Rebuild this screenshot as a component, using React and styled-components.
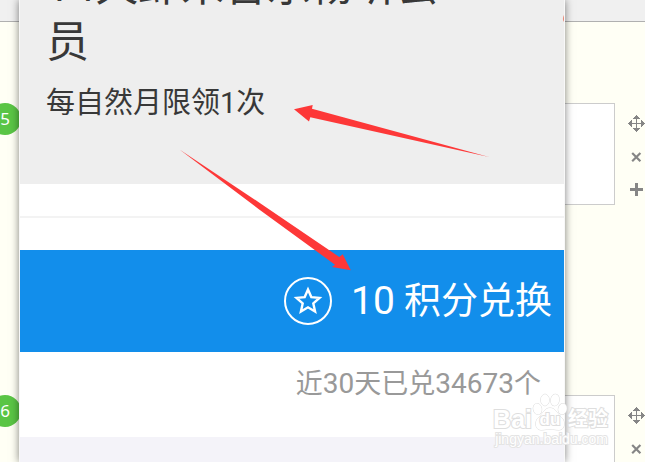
import React from "react";
import styled, { createGlobalStyle } from "styled-components";

const steps = [5, 6];

function MoveIcon() {
  return (
    <svg width="17" height="17" viewBox="0 0 17 17" fill="#868686" shapeRendering="crispEdges">
      <path d="M8 3h1v11H8zM3 8h11v1H3z" />
      <path d="M8 0h1v1h1v1h1v1h1v1H5V3h1V2h1V1h1z" />
      <path d="M8 17h1v-1h1v-1h1v-1h1v-1H5v1h1v1h1v1h1z" />
      <path d="M0 8v1h1v1h1v1h1v1h1V5H3v1H2v1H1v1z" />
      <path d="M17 8v1h-1v1h-1v1h-1v1h-1V5h1v1h1v1h1v1z" />
    </svg>
  );
}

function CloseIcon() {
  return (
    <svg width="11" height="11" viewBox="0 0 11 11" stroke="#868686" strokeWidth="2.2">
      <path d="M1.2 2L9.4 10.2M9.4 2L1.2 10.2" />
    </svg>
  );
}

function PlusIcon() {
  return (
    <svg width="13" height="15" viewBox="0 0 13 15" fill="#868686">
      <path d="M5 2h3v5h5v3H8v5H5v-5H0V7h5z" />
    </svg>
  );
}

function StarIcon() {
  return (
    <svg width="50" height="50" viewBox="0 0 50 50" fill="none" stroke="#fff">
      <circle cx="25" cy="25" r="23" strokeWidth="2" />
      <path
        d="M25 13.5L28.3 21.1L36.5 21.9L30.3 27.4L32.1 35.5L25 31.3L17.9 35.5L19.7 27.4L13.5 21.9L21.7 21.1Z"
        strokeWidth="2.4"
      />
    </svg>
  );
}

function Watermark() {
  return (
    <Mark>
      <div className="brand">
        <span>Bai</span>
        <span className="paw">
          <svg width="36" height="38" viewBox="0 0 36 38" fill="#fff" stroke="#dcdcdc">
            <ellipse cx="5.5" cy="16" rx="4.2" ry="5.5" transform="rotate(-12 5.5 16)" />
            <ellipse cx="13" cy="7" rx="4.2" ry="5.8" />
            <ellipse cx="23" cy="7" rx="4.2" ry="5.8" transform="rotate(8 23 7)" />
            <ellipse cx="30.5" cy="16" rx="4.2" ry="5.5" transform="rotate(14 30.5 16)" />
            <path d="M18 15C24 15 25 21 29 24C34 28 33 37 27 37C23 37 21 36 18 36C15 36 13 37 9 37C3 37 2 28 7 24C11 21 12 15 18 15Z" />
          </svg>
          <span className="du">du</span>
        </span>
        <span className="cn">经验</span>
      </div>
      <div className="url">jingyan.baidu.com</div>
    </Mark>
  );
}

function App() {
  return (
    <Page>
      <GlobalStyle />
      <Rail $left>
        <TopBar />
        {steps.map((step) => (
          <Step key={step}>
            <Badge>{step}</Badge>
          </Step>
        ))}
      </Rail>

      <Phone>
        <Hero>
          <h1>14天虾米音乐畅听会员</h1>
          <p>每自然月限领1次</p>
        </Hero>
        <Gap />
        <Gap $line />
        <Redeem type="button">
          <StarIcon />
          <span>
            <Num $size={39}>10</Num> 积分兑换
          </span>
        </Redeem>
        <Count>
          近<Num $size={28}>30</Num>天已兑<Num $size={28}>34673</Num>个
        </Count>
        <Footer />
      </Phone>

      <Rail>
        <TopBar />
        {steps.map((step) => (
          <Step key={step}>
            <Box />
            <Tools>
              <button type="button" aria-label="移动">
                <MoveIcon />
              </button>
              <button type="button" aria-label="删除">
                <CloseIcon />
              </button>
              <button type="button" aria-label="添加">
                <PlusIcon />
              </button>
            </Tools>
          </Step>
        ))}
      </Rail>

      <Arrows width="645" height="462" viewBox="0 0 645 462" fill="#fd3838">
        <path d="M294 109.3L312.7 105L312 108.8L489 157L310.3 117.3L309 121.5Z" />
        <path d="M179.5 149.5L262 204.4L339.3 257L342.7 254.3L350.8 270.3L332 267L335 264.7L258.5 209Z" />
        <path d="M564 15C562.5 18 562.5 20 564 22Z" fill="#e88c7c" />
      </Arrows>
      <Watermark />
    </Page>
  );
}

const GlobalStyle = createGlobalStyle`
  * {
    box-sizing: border-box;
  }

  body {
    margin: 0;
    font-family: Roboto, "Noto Sans CJK SC", sans-serif;
  }
`;

const Page = styled.div`
  position: relative;
  display: flex;
  height: 100vh;
  overflow: hidden;
  background-color: #fffff5;
`;

const Rail = styled.div`
  flex: none;
  width: ${(props) => (props.$left ? "19px" : "80px")};
`;

const TopBar = styled.div`
  height: 22px;
  margin-bottom: 81px;
  background-color: #f0f0f0;
  border-bottom: 1px solid #b0b0b0;
`;

const Step = styled.div`
  display: flex;
  height: 102px;
  margin-bottom: 190px;
`;

const Badge = styled.div`
  flex: none;
  width: 32px;
  height: 32px;
  margin-left: -11px;
  border-radius: 50%;
  background-color: #5ac545;
  color: white;
  font-family: "Noto Sans", sans-serif;
  font-size: 17px;
  line-height: 32px;
  text-align: center;
`;

const Box = styled.div`
  width: 50px;
  background-color: white;
  border: 1px solid #ccc;
  border-left: 0;
`;

const Tools = styled.div`
  display: flex;
  flex-direction: column;
  padding-top: 4px;
  margin-left: 12px;

  button {
    display: flex;
    align-items: center;
    justify-content: center;
    width: 18px;
    height: 33px;
    padding: 0;
    border: 0;
    background: none;
    cursor: pointer;
  }

  svg {
    flex: none;
  }
`;

const Phone = styled.main`
  position: relative;
  display: flex;
  flex-direction: column;
  flex: 1;
  min-width: 0;
  border: solid #f8f8f8;
  border-width: 0 1px;
  background-color: white;
  box-shadow: 0 0 8px rgba(0, 0, 0, 0.5);
`;

const Num = styled.span`
  font-size: ${(props) => props.$size}px;
`;

const Hero = styled.section`
  display: flex;
  flex-direction: column;
  justify-content: flex-end;
  flex: none;
  height: 184px;
  padding: 0 100px 60px 26px;
  overflow: hidden;
  background-color: #eee;
  color: #383838;

  h1 {
    margin: 0 0 13px;
    font-family: "Noto Sans", "Noto Sans CJK SC", sans-serif;
    font-size: 43px;
    font-weight: 400;
    line-height: 56px;
  }

  p {
    margin: 0;
    font-size: 29px;
    line-height: 42px;
  }
`;

const Gap = styled.div`
  flex: none;
  height: ${(props) => (props.$line ? "34px" : "32px")};
  border-top: ${(props) => (props.$line ? "2px solid #f3f3f3" : "0")};
`;

const Redeem = styled.button`
  display: flex;
  align-items: center;
  justify-content: flex-end;
  gap: 18px;
  flex: none;
  height: 102px;
  padding: 0 12px 0 0;
  border: 0;
  background-color: #128eeb;
  color: white;
  font-family: inherit;
  font-size: 37px;
  line-height: 56px;
  cursor: pointer;
`;

const Count = styled.p`
  flex: none;
  height: 85px;
  margin: 0;
  padding: 12px 23px 0 0;
  color: #999;
  font-size: 27px;
  line-height: 40px;
  text-align: right;
`;

const Footer = styled.div`
  flex: 1;
  background-color: #f4f3f9;
`;

const Arrows = styled.svg`
  position: absolute;
  top: 0;
  left: 0;
  pointer-events: none;
`;

const Mark = styled.div`
  position: absolute;
  right: 37px;
  bottom: 15px;
  color: white;
  font-family: "Liberation Sans", "Noto Sans CJK SC", sans-serif;
  -webkit-text-stroke: 2px #dedede;
  paint-order: stroke fill;
  pointer-events: none;

  .brand {
    display: flex;
    align-items: flex-end;
    font-size: 25px;
    font-weight: 700;
    line-height: 24px;
  }

  .paw {
    position: relative;
    display: flex;
  }

  .du {
    position: absolute;
    right: 0;
    bottom: 0;
    left: 0;
    font-size: 17px;
    line-height: 22px;
    text-align: center;
  }

  .cn {
    font-size: 20px;
  }

  .url {
    font-size: 14px;
    line-height: 16px;
    text-align: right;
    -webkit-text-stroke: 2px #e4e4e4;
  }
`;

export default App;
